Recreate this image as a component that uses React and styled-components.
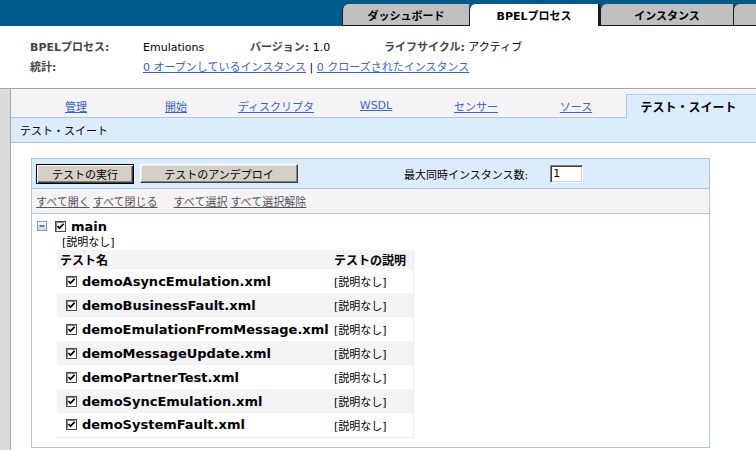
import React from 'react';
import styled, { createGlobalStyle } from 'styled-components';

const GlobalStyle = createGlobalStyle`
  html, body {
    margin: 0;
    padding: 0;
    background: #fff;
  }
  body {
    font-family: "DejaVu Sans", "Noto Sans CJK JP", sans-serif;
    font-size: 11px;
    color: #000;
    width: 756px;
    height: 450px;
    overflow: hidden;
  }
`;

const tests = [
  'demoAsyncEmulation.xml',
  'demoBusinessFault.xml',
  'demoEmulationFromMessage.xml',
  'demoMessageUpdate.xml',
  'demoPartnerTest.xml',
  'demoSyncEmulation.xml',
  'demoSystemFault.xml',
];

const subTabs = ['管理', '開始', 'ディスクリプタ', 'WSDL', 'センサー', 'ソース'];

function CheckBox() {
  return (
    <svg width="11" height="11" viewBox="0 0 11 11">
      <rect x="0.5" y="0.5" width="10" height="10" fill="#fff" stroke="#4a4a4a" />
      <line x1="1.5" y1="1.5" x2="9.5" y2="1.5" stroke="#808080" />
      <line x1="1.5" y1="1.5" x2="1.5" y2="9.5" stroke="#808080" />
      <path d="M2.5 5 L4.5 7.2 L8.6 2.8" fill="none" stroke="#000" strokeWidth="1.7" />
    </svg>
  );
}

function MinusBox() {
  return (
    <svg width="10" height="10" viewBox="0 0 10 10">
      <defs>
        <linearGradient id="mb" x1="0" y1="0" x2="0" y2="1">
          <stop offset="0" stopColor="#ffffff" />
          <stop offset="1" stopColor="#c8d4e4" />
        </linearGradient>
      </defs>
      <rect x="0.5" y="0.5" width="9" height="9" fill="url(#mb)" stroke="#7f9db9" />
      <line x1="2.5" y1="5" x2="7.5" y2="5" stroke="#2b4f86" strokeWidth="1.4" />
    </svg>
  );
}

export default function App() {
  return (
    <Page>
      <GlobalStyle />
      <TopBar>
        <TopTab $w={127}>ダッシュボード</TopTab>
        <TopTab $w={131} $active>BPELプロセス</TopTab>
        <TopTab $w={133}>インスタンス</TopTab>
        <TopTab $grow />
      </TopBar>

      <Header>
        <HeaderGrid>
          <Label>BPELプロセス:</Label>
          <span>Emulations</span>
          <span>
            <Label>バージョン:</Label> 1.0
          </span>
          <span>
            <Label>ライフサイクル:</Label> アクティブ
          </span>
          <Label>統計:</Label>
          <Stats>
            <BlueLink href="#">0 オープンしているインスタンス</BlueLink>
            {' | '}
            <BlueLink href="#">0 クローズされたインスタンス</BlueLink>
          </Stats>
        </HeaderGrid>
      </Header>

      <Body>
        <LeftStrip />
        <Main>
          <SubTabs>
            {subTabs.map((t) => (
              <SubTab key={t}>
                <BlueLink href="#">{t}</BlueLink>
              </SubTab>
            ))}
            <ActiveSubTab>テスト・スイート</ActiveSubTab>
          </SubTabs>
          <SubHeader>テスト・スイート</SubHeader>

          <Content>
            <Panel>
              <Toolbar>
                <Button $default $w={98}>テストの実行</Button>
                <Button $w={158}>テストのアンデプロイ</Button>
                <MaxField>
                  <span>最大同時インスタンス数:</span>
                  <NumberInput defaultValue="1" />
                </MaxField>
              </Toolbar>

              <LinkRow>
                <LinkGroup>
                  <GrayLink href="#">すべて開く</GrayLink>
                  <GrayLink href="#">すべて閉じる</GrayLink>
                </LinkGroup>
                <LinkGroup>
                  <GrayLink href="#">すべて選択</GrayLink>
                  <GrayLink href="#">すべて選択解除</GrayLink>
                </LinkGroup>
              </LinkRow>

              <Tree>
                <TreeRow>
                  <MinusBox />
                  <CheckBox />
                  <SuiteName>main</SuiteName>
                </TreeRow>
                <TreeDesc>[説明なし]</TreeDesc>
                <Table>
                  <thead>
                    <tr>
                      <HeadCell $w={274}>テスト名</HeadCell>
                      <HeadCell $w={82}>テストの説明</HeadCell>
                    </tr>
                  </thead>
                  <tbody>
                    {tests.map((t, i) => (
                      <Row key={t} $alt={i % 2 === 1}>
                        <Cell>
                          <NameWrap>
                            <CheckBox />
                            <TestName>{t}</TestName>
                          </NameWrap>
                        </Cell>
                        <Cell>[説明なし]</Cell>
                      </Row>
                    ))}
                  </tbody>
                </Table>
              </Tree>
            </Panel>
          </Content>
        </Main>
      </Body>
    </Page>
  );
}

const Page = styled.div`
  width: 756px;
  height: 450px;
  display: flex;
  flex-direction: column;
  overflow: hidden;
`;

const TopBar = styled.div`
  height: 26px;
  flex-shrink: 0;
  box-sizing: border-box;
  background: #005a8c;
  display: flex;
  align-items: flex-end;
  padding-left: 342px;
`;

const TopTab = styled.div`
  ${(p) => (p.$grow ? 'flex: 1;' : `width: ${p.$w}px; flex-shrink: 0;`)}
  height: 22px;
  box-sizing: border-box;
  display: flex;
  align-items: center;
  justify-content: center;
  font-weight: bold;
  font-size: 11px;
  background: ${(p) => (p.$active ? '#fff' : '#c0c0c0')};
  border-left: 1px solid #1a1a1a;
  border-right: ${(p) => (p.$active ? '2px solid #1a1a1a' : 'none')};
  border-bottom: ${(p) => (p.$active ? 'none' : '1px solid #1a1a1a')};
  border-top-left-radius: 6px;
`;

const Header = styled.div`
  height: 63px;
  flex-shrink: 0;
  box-sizing: border-box;
  padding: 12px 0 0 30px;
  border-bottom: 1px solid #a8a8a8;
`;

const HeaderGrid = styled.div`
  display: grid;
  grid-template-columns: 113px 107px 134px auto;
  line-height: 20px;
`;

const Label = styled.span`
  font-weight: bold;
  color: #454545;
`;

const Stats = styled.span`
  grid-column: 2 / 5;
`;

const BlueLink = styled.a`
  color: #3366cc;
  text-decoration: underline;
`;

const Body = styled.div`
  flex: 1;
  display: flex;
  min-height: 0;
`;

const LeftStrip = styled.div`
  width: 10px;
  flex-shrink: 0;
  background: #dcdcdc;
  border-right: 1px solid #a8a8a8;
`;

const Main = styled.div`
  flex: 1;
  display: flex;
  flex-direction: column;
  min-width: 0;
`;

const SubTabs = styled.div`
  height: 28px;
  display: flex;
  align-items: flex-end;
  padding-left: 15px;
  background: #f6f3f7;
  border-bottom: 1px solid #a9c4f0;
`;

const SubTab = styled.div`
  width: 100px;
  height: 23px;
  flex-shrink: 0;
  display: flex;
  align-items: center;
  justify-content: center;
`;

const ActiveSubTab = styled.div`
  flex: 1;
  height: 24px;
  margin-bottom: -1px;
  box-sizing: border-box;
  background: #ddecfd;
  border: 1px solid #a9c4f0;
  border-bottom: none;
  border-right: none;
  display: flex;
  align-items: center;
  justify-content: center;
  font-weight: bold;
  font-size: 12px;
  padding-right: 6px;
`;

const SubHeader = styled.div`
  height: 24px;
  display: flex;
  align-items: center;
  padding-left: 9px;
  background: #ddecfd;
  border-bottom: 1px solid #a9c4f0;
`;

const Content = styled.div`
  padding: 15px 0 0 20px;
`;

const Panel = styled.div`
  width: 679px;
  box-sizing: border-box;
  border: 1px solid #a9c4f0;
  padding-bottom: 9px;
`;

const Toolbar = styled.div`
  height: 29px;
  display: flex;
  align-items: center;
  gap: 6px;
  padding-left: 4px;
  background: #ddecfd;
  border-bottom: 1px solid #a9c4f0;
`;

const Button = styled.button`
  width: ${(p) => p.$w}px;
  height: ${(p) => (p.$default ? 20 : 19)}px;
  padding: 0;
  font-family: inherit;
  font-size: 11px;
  color: #000;
  background: #d4d0c8;
  border: 1px solid;
  border-color: ${(p) => (p.$default ? '#000' : '#fff #404040 #404040 #fff')};
  box-shadow: ${(p) =>
    p.$default
      ? 'inset 1px 1px #fff, inset -1px -1px #404040, inset -2px -2px #808080'
      : 'inset -1px -1px #808080, inset 1px 1px #e8e6e0'};
`;

const MaxField = styled.div`
  margin-left: 100px;
  display: flex;
  align-items: center;
  gap: 22px;
`;

const NumberInput = styled.input`
  width: 33px;
  height: 18px;
  box-sizing: border-box;
  padding: 0 2px;
  font-family: inherit;
  font-size: 11px;
  background: #fff;
  border: 1px solid;
  border-color: #808080 #fff #fff #808080;
  box-shadow: inset 1px 1px #404040, inset -1px -1px #d4d0c8;
  outline: none;
`;

const LinkRow = styled.div`
  height: 24px;
  display: flex;
  align-items: center;
  gap: 16px;
  padding-left: 4px;
  background: #f6f3f7;
  border-bottom: 1px solid #a9c4f0;
`;

const LinkGroup = styled.div`
  display: flex;
  gap: 3px;
`;

const GrayLink = styled.a`
  color: #555;
  text-decoration: underline;
`;

const Tree = styled.div`
  padding: 3px 0 0 5px;
`;

const TreeRow = styled.div`
  height: 18px;
  display: flex;
  align-items: center;
  & > svg:first-child {
    margin-right: 8px;
  }
  & > svg + svg {
    margin-right: 5px;
  }
`;

const SuiteName = styled.span`
  font-weight: bold;
  font-size: 13px;
`;

const TreeDesc = styled.div`
  height: 15px;
  line-height: 15px;
  padding-left: 25px;
`;

const Table = styled.table`
  margin-left: 20px;
  border-collapse: collapse;
  border-right: 1px solid #ececec;
  border-bottom: 1px solid #ececec;
`;

const HeadCell = styled.th`
  width: ${(p) => p.$w}px;
  height: 19px;
  padding: 0 0 0 3px;
  box-sizing: border-box;
  text-align: left;
  font-weight: bold;
  font-size: 12px;
  background: #f6f3f7;
`;

const Row = styled.tr`
  height: 24px;
  background: ${(p) => (p.$alt ? '#f6f3f7' : '#fff')};
`;

const Cell = styled.td`
  padding: 0 0 0 3px;
`;

const NameWrap = styled.div`
  display: flex;
  align-items: center;
  gap: 5px;
  padding-left: 6px;
`;

const TestName = styled.span`
  font-weight: bold;
  font-size: 13px;
`;
